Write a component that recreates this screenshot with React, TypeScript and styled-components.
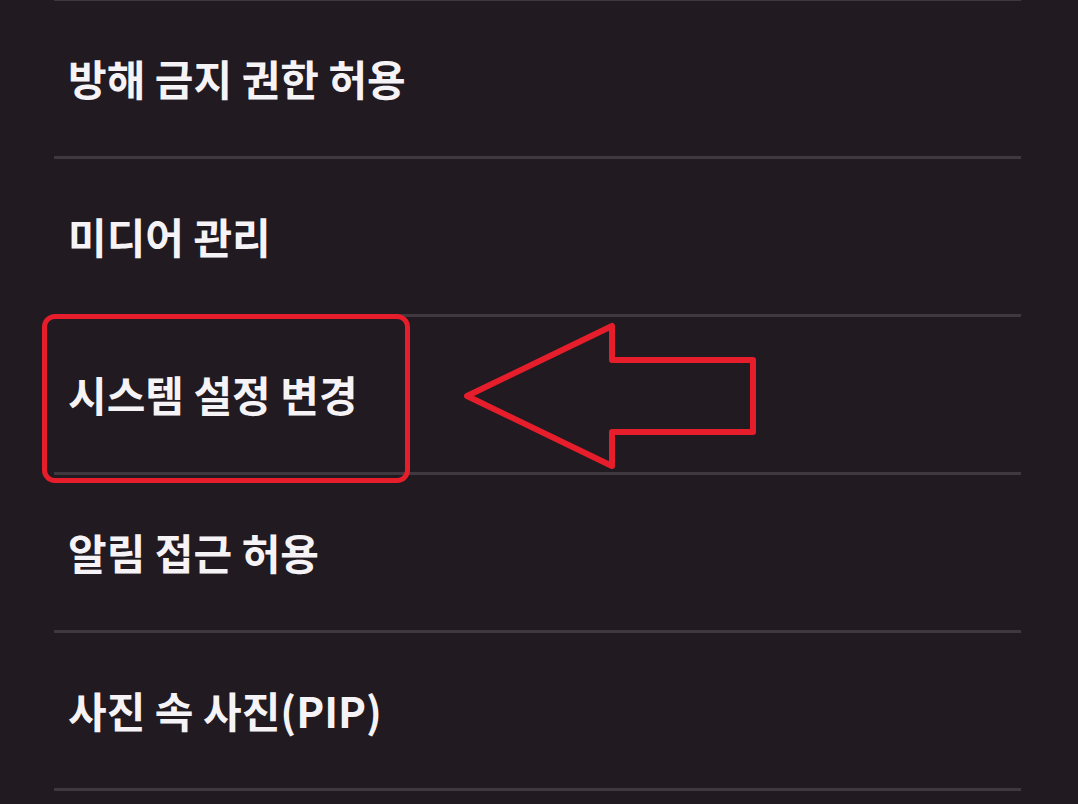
import React from "react";
import styled, { createGlobalStyle } from "styled-components";

const Global = createGlobalStyle`
  html, body { margin: 0; padding: 0; background: #211a20; }
  body { width: 1078px; height: 804px; overflow: hidden; }
`;

const Page = styled.div`
  position: relative;
  width: 1078px;
  height: 804px;
  background: #211a20;
  font-family: "Noto Sans CJK KR", "Noto Sans", sans-serif;
`;

const List = styled.div`
  display: flex;
  flex-direction: column;
  padding: 0 57px 0 54px;
`;

const Divider = styled.div<{ $top?: boolean }>`
  height: ${(p) => (p.$top ? "1px" : "3px")};
  background: #3f383e;
`;

const Row = styled.div`
  height: 155px;
  display: flex;
  align-items: center;
  padding-left: 14px;
  padding-bottom: 2px;
  box-sizing: border-box;
  color: #f6f3f6;
  font-size: 42px;
  font-weight: 600;
  letter-spacing: 0;
`;

const Highlight = styled.div`
  position: absolute;
  left: 42px;
  top: 314px;
  width: 358px;
  height: 159px;
  border: 5px solid #e61e2b;
  border-radius: 13px;
`;

const Arrow = styled.svg`
  position: absolute;
  left: 0;
  top: 0;
  pointer-events: none;
`;

const items = [
  "방해 금지 권한 허용",
  "미디어 관리",
  "시스템 설정 변경",
  "알림 접근 허용",
  "사진 속 사진(PIP)",
];

export default function App() {
  return (
    <Page>
      <Global />
      <List>
        <Divider $top />
        {items.map((t) => (
          <React.Fragment key={t}>
            <Row>{t}</Row>
            <Divider />
          </React.Fragment>
        ))}
      </List>
      <Highlight />
      <Arrow width="1078" height="804">
        <polygon
          points="467,396 612,326 612,360 753,360 753,432 612,432 612,466"
          fill="none"
          stroke="#e61e2b"
          strokeWidth="6"
          strokeLinejoin="round"
        />
      </Arrow>
    </Page>
  );
}
